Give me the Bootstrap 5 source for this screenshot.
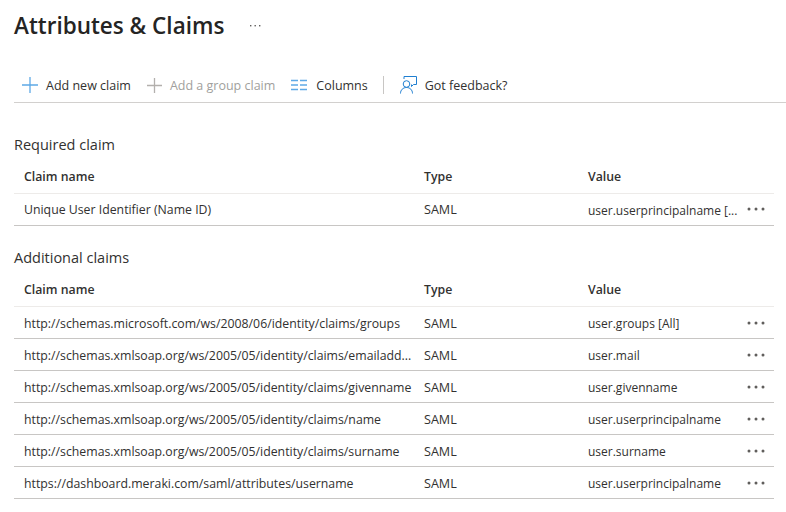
<!DOCTYPE html>
<html lang="en">
<head>
    <meta charset="UTF-8" />
    <meta name="viewport" content="width=device-width, initial-scale=1" />
    <title>Attributes &amp; Claims</title>
    <link href="https://cdn.jsdelivr.net/npm/bootstrap@5.3.0/dist/css/bootstrap.min.css" rel="stylesheet" />
    <style>
        body {
            background: #fff;
            font-family: "Open Sans", "Noto Sans", sans-serif;
            font-size: 12.3px;
            color: #323130;
            overflow: hidden;
        }

        .page-wrap {
            padding: 0 0 0 14px;
        }

        .page-head {
            height: 68px;
            padding-top: 8px;
        }

        .page-title {
            font-size: 22.5px;
            line-height: 36px;
            font-weight: 600;
            color: #252423;
            margin: 0;
        }

        .title-more {
            margin-left: 25px;
            margin-top: 16px;
            width: 13px;
        }

        .cmd-bar {
            height: 35px;
            border-bottom: 1px solid #d2d0ce;
            padding-left: 8px;
            font-size: 12.5px;
        }

        .cmd-item {
            color: #323130;
            white-space: nowrap;
            gap: 8px;
        }

        .cmd-item span {
            padding-top: 2px;
        }

        .cmd-item svg {
            flex: none;
        }

        .cmd-item + .cmd-item {
            margin-left: 16px;
        }

        .cmd-off {
            color: #a19f9d;
        }

        .cmd-cols {
            gap: 9px;
        }

        .cmd-sep {
            width: 1px;
            height: 18px;
            background: #c8c6c4;
            margin: 0 16px 0 15px;
        }

        .sect-title {
            font-size: 14.5px;
            line-height: 20px;
            font-weight: 400;
            color: #323130;
            margin: 0 0 5px;
        }

        .claims-wrap {
            width: 760px;
        }

        .claims-table {
            table-layout: fixed;
            width: 760px;
            margin: 0;
            color: #323130;
        }

        .claims-table th,
        .claims-table td {
            padding: 3px 0 0 10px;
            height: 32px;
            vertical-align: middle;
            white-space: nowrap;
            overflow: hidden;
            border-bottom: 1px solid #c8c6c4;
            background: transparent;
            color: #323130;
        }

        .claims-table th {
            padding-top: 2px;
            font-weight: 600;
            height: 33px;
            border-bottom-color: #edebe9;
        }

        .claims-table td.more-cell {
            padding: 0 0 0 9px;
        }

        .claims-table td.value-cell {
            font-size: 12px;
        }

        .claims-table td.type-cell {
            font-size: 12.6px;
        }

        .col-name { width: 400px; }
        .col-type { width: 164px; }
        .col-value { width: 160px; }
        .col-more { width: 36px; }

        .row-more {
            display: block;
        }

        .block-one { margin-top: 32px; }
        .block-two { margin-top: 22px; }
        .block-two .sect-title { margin-bottom: 6px; }
        .block-two .claims-table th { padding-top: 0; }
    </style>
</head>
<body>
    <div class="page-wrap">
        <div class="page-head d-flex align-items-start">
            <h1 class="page-title">Attributes &amp; Claims</h1>
            <svg class="title-more" height="3" viewBox="0 0 13 3"><g fill="#605e5c"><rect x="1" y="1" width="1.4" height="1.4"/><rect x="5.5" y="1" width="1.4" height="1.4"/><rect x="10" y="1" width="1.4" height="1.4"/></g></svg>
        </div>

        <div class="cmd-bar d-flex align-items-center">
            <div class="cmd-item d-flex align-items-center">
                <svg width="16" height="16" viewBox="0 0 16 16"><path d="M8 0v16M0 8h16" stroke="#5ea9e6" stroke-width="1.3" fill="none"/></svg>
                <span>Add new claim</span>
            </div>
            <div class="cmd-item cmd-off d-flex align-items-center">
                <svg width="15" height="15" viewBox="0 0 15 15"><path d="M7.500 0v15M0 7.500h15" stroke="#b3b0ad" stroke-width="1.3" fill="none"/></svg>
                <span>Add a group claim</span>
            </div>
            <div class="cmd-item cmd-cols d-flex align-items-center">
                <svg width="16" height="12" viewBox="0 0 16 12"><path d="M0 1.500h7M9 1.500h7M0 6h7M9 6h7M0 10.500h7M9 10.500h7" stroke="#5ea9e6" stroke-width="1.500" fill="none"/></svg>
                <span>Columns</span>
            </div>
            <div class="cmd-sep"></div>
            <div class="cmd-item d-flex align-items-center">
                <svg width="17" height="18" viewBox="0 0 17 18"><g fill="none" stroke-width="1"><path d="M4 3V.5h12.500v8h-3l-2 2V8.500" stroke="#1f7fd1"/><circle cx="6.500" cy="8" r="3.300" stroke="#1f7fd1"/><path d="M.5 17.500c0-3.500 2.500-6 6-6s6 2.500 6 6" stroke="#1f7fd1"/></g></svg>
                <span>Got feedback?</span>
            </div>
        </div>

        <div class="claims-wrap block-one">
            <h2 class="sect-title">Required claim</h2>
            <table class="table claims-table">
                <thead>
                    <tr>
                        <th class="col-name">Claim name</th>
                        <th class="col-type">Type</th>
                        <th class="col-value">Value</th>
                        <th class="col-more"></th>
                    </tr>
                </thead>
                <tbody id="requiredRows"></tbody>
            </table>
        </div>

        <div class="claims-wrap block-two">
            <h2 class="sect-title">Additional claims</h2>
            <table class="table claims-table">
                <thead>
                    <tr>
                        <th class="col-name">Claim name</th>
                        <th class="col-type">Type</th>
                        <th class="col-value">Value</th>
                        <th class="col-more"></th>
                    </tr>
                </thead>
                <tbody id="additionalRows"></tbody>
            </table>
        </div>
    </div>

    <script>
        const requiredClaims = [
            ['Unique User Identifier (Name ID)', 'user.userprincipalname [...']
        ];
        const additionalClaims = [
            ['http://schemas.microsoft.com/ws/2008/06/identity/claims/groups', 'user.groups [All]'],
            ['http://schemas.xmlsoap.org/ws/2005/05/identity/claims/emailadd...', 'user.mail'],
            ['http://schemas.xmlsoap.org/ws/2005/05/identity/claims/givenname', 'user.givenname'],
            ['http://schemas.xmlsoap.org/ws/2005/05/identity/claims/name', 'user.userprincipalname'],
            ['http://schemas.xmlsoap.org/ws/2005/05/identity/claims/surname', 'user.surname'],
            ['https://dashboard.meraki.com/saml/attributes/username', 'user.userprincipalname']
        ];

        const moreIcon = '<svg class="row-more" width="18" height="4" viewBox="0 0 18 4"><g fill="#605e5c"><circle cx="2" cy="2" r="1.500"/><circle cx="9" cy="2" r="1.500"/><circle cx="16" cy="2" r="1.500"/></g></svg>';

        function fillRows(id, rows) {
            document.getElementById(id).innerHTML = rows.map(r =>
                `<tr><td>${r[0]}</td><td class="type-cell">SAML</td><td class="value-cell">${r[1]}</td><td class="more-cell">${moreIcon}</td></tr>`
            ).join('');
        }

        fillRows('requiredRows', requiredClaims);
        fillRows('additionalRows', additionalClaims);
    </script>
    <script src="https://cdn.jsdelivr.net/npm/bootstrap@5.3.0/dist/js/bootstrap.bundle.min.js"></script>
</body>
</html>
